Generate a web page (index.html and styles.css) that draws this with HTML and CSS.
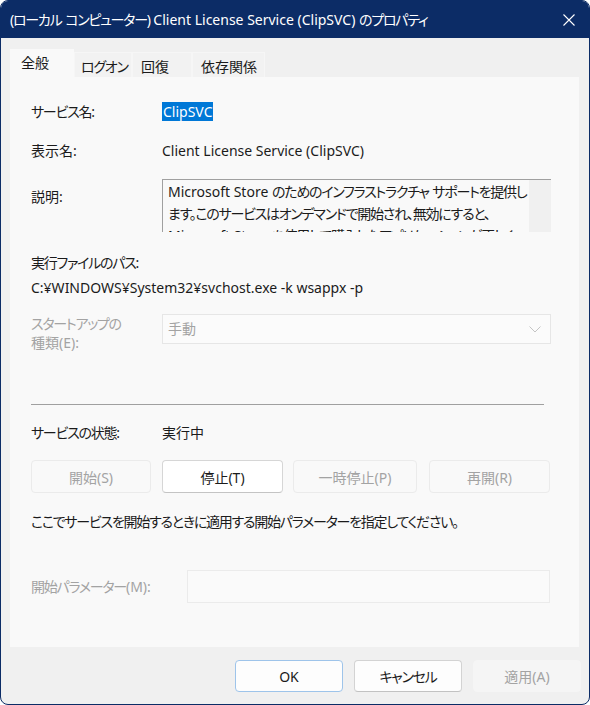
FILE: index.html
```html
<!DOCTYPE html>
<html lang="ja">
<head>
<meta charset="utf-8">
<title>ClipSVC のプロパティ</title>
<link rel="stylesheet" href="styles.css">
</head>
<body>
<div class="window">
  <div class="titlebar">
    <span class="title"><span class="ja">(ローカル</span> <span class="ja">コンピューター)</span> Client License Service (ClipSVC) <span class="ja">のプロパティ</span></span>
    <svg class="close" width="12" height="12" viewBox="0 0 12 12"><path d="M0.5 0.5 L11.5 11.5 M11.5 0.5 L0.5 11.5" stroke="#ffffff" stroke-width="1.1" fill="none"/></svg>
  </div>
  <div class="tabs">
    <div class="tab tab-selected tab-general">全般</div>
    <div class="tab tab-logon"><span class="ja">ログオン</span></div>
    <div class="tab tab-recovery">回復</div>
    <div class="tab tab-deps">依存関係</div>
  </div>
  <div class="panel">
    <div class="row row-name">
      <span class="label ja">サービス名:</span>
      <span class="value"><span class="selected-text">ClipSVC</span></span>
    </div>
    <div class="row row-display">
      <span class="label">表示名:</span>
      <span class="value">Client License Service (ClipSVC)</span>
    </div>
    <div class="row row-desc">
      <span class="label label-desc">説明:</span>
      <div class="descbox">
        <div class="desctext">Microsoft Store <span class="ja">のためのインフラストラクチャ</span> <span class="ja">サポートを提供し</span><br><span class="ja">ます。このサービスはオンデマンドで開始され、無効にすると、</span><br>Microsoft Store <span class="ja">を使用して購入したアプリケーションが正しく</span></div>
        <div class="scrollbar"></div>
      </div>
    </div>
    <div class="row row-pathlabel">
      <span class="label ja">実行ファイルのパス:</span>
    </div>
    <div class="row row-path">
      <span class="label">C:¥WINDOWS¥System32¥svchost.exe -k wsappx -p</span>
    </div>
    <div class="row row-startup">
      <span class="label label-startup disabled"><span class="ja">スタートアップの</span><br>種類(E):</span>
      <div class="combo">
        <span class="combo-text">手動</span>
        <svg class="chevron" width="12" height="7" viewBox="0 0 12 7"><path d="M0.5 0.5 L6 6 L11.5 0.5" stroke="#c4c4c4" stroke-width="1" fill="none"/></svg>
      </div>
    </div>
    <div class="separator"></div>
    <div class="row row-status">
      <span class="label ja">サービスの状態:</span>
      <span class="value">実行中</span>
    </div>
    <div class="btnrow">
      <div class="btn btn-disabled btn-start">開始(S)</div>
      <div class="btn btn-stop">停止(T)</div>
      <div class="btn btn-disabled btn-pause">一時停止(P)</div>
      <div class="btn btn-disabled btn-resume">再開(R)</div>
    </div>
    <div class="row row-info">
      <span class="label ja">ここでサービスを開始するときに適用する開始パラメーターを指定してください。</span>
    </div>
    <div class="row row-param">
      <span class="label label-param disabled"><span class="ja">開始パラメーター</span>(M):</span>
      <div class="paraminput"></div>
    </div>
  </div>
  <div class="footer">
    <div class="fbtn fbtn-default">OK</div>
    <div class="fbtn"><span class="ja">キャンセル</span></div>
    <div class="fbtn fbtn-disabled">適用(A)</div>
  </div>
</div>
</body>
</html>
```
FILE: styles.css
```css
* { box-sizing: border-box; }
html, body { margin: 0; padding: 0; background: #ffffff; }
body {
  font-family: "Noto Sans", "Noto Sans CJK JP", sans-serif;
  font-size: 14px;
  font-feature-settings: "palt";
  color: #1b1b1b;
}
.ja { letter-spacing: -1.25px; }
.window {
  width: 590px;
  height: 705px;
  border: 1px solid #0c2c66;
  border-radius: 8px;
  overflow: hidden;
  background: #f0f0f0;
  display: flex;
  flex-direction: column;
}
.titlebar {
  height: 37px;
  flex: none;
  background: #0c2c66;
  display: flex;
  align-items: center;
  justify-content: space-between;
  padding: 0 14px 0 9px;
}
.title {
  color: #ffffff;
  font-size: 14px;
  line-height: 20px;
  white-space: nowrap;
}
.close { display: block; margin-top: 1px; }
.tabs {
  display: flex;
  align-items: flex-end;
  margin: 11px 0 0 9px;
  height: 28px;
  flex: none;
}
.tab {
  height: 25px;
  padding: 4px 0 0 6px;
  line-height: 20px;
  background: #f2f2f2;
  border: 1px solid #f6f6f6;
  border-bottom: none;
  white-space: nowrap;
  color: #1b1b1b;
}
.tab-selected {
  height: 28px;
  padding: 3px 0 0 10px;
  background: #f9f9f9;
  border-color: #f9f9f9;
}
.tab-general { width: 64px; }
.tab-logon { width: 58px; }
.tab-recovery { width: 60px; padding-left: 8px; }
.tab-deps { width: 73px; padding-left: 8px; }
.panel {
  margin: 0 10px 0 9px;
  height: 570px;
  flex: none;
  background: #f9f9f9;
  padding: 0 0 0 21px;
  display: flex;
  flex-direction: column;
}
.row {
  display: flex;
  align-items: center;
  line-height: 20px;
  white-space: nowrap;
}
.label { flex: none; }
.row-name .label,
.row-display .label,
.row-desc .label,
.row-status .label,
.row-startup .label { width: 131px; }
.value { flex: none; }
.selected-text {
  display: inline-block;
  background: #0078d7;
  color: #ffffff;
  line-height: 19px;
  padding: 0 1px;
}
.row-name { margin-top: 25px; }
.row-display { margin-top: 19px; }
.row-desc { margin-top: 18px; align-items: flex-start; }
.label-desc { padding-top: 8px; }
.descbox {
  width: 389px;
  height: 53px;
  border-top: 1px solid #a0a0a0;
  border-left: 1px solid #a0a0a0;
  background: #ffffff;
  display: flex;
  overflow: hidden;
}
.desctext {
  flex: 1;
  padding: 1px 0 0 5px;
  line-height: 22px;
  white-space: nowrap;
  overflow: hidden;
  background: #f9f9f9;
}
.scrollbar {
  width: 22px;
  flex: none;
  background: #f0f0f0;
}
.row-pathlabel { margin-top: 21px; }
.row-path { margin-top: 5px; }
.row-startup { margin-top: 16px; align-items: flex-start; }
.label-startup { line-height: 19px; }
.disabled { color: #a3a3a3; }
.combo {
  width: 389px;
  height: 30px;
  border: 1px solid #e6e6e6;
  background: #fbfbfb;
  display: flex;
  align-items: center;
  justify-content: space-between;
  padding: 0 9px 0 5px;
}
.combo-text { color: #a3a3a3; }
.chevron { display: block; }
.separator {
  margin-top: 52px;
  width: 513px;
  height: 1px;
  background: #a0a0a0;
  flex: none;
}
.row-status { margin-top: 18px; }
.btnrow {
  margin-top: 17px;
  display: flex;
  height: 33px;
  flex: none;
}
.btn {
  height: 33px;
  border-radius: 4px;
  display: flex;
  align-items: center;
  justify-content: center;
  white-space: nowrap;
}
.btn-disabled {
  background: #f9f9f9;
  border: 1px solid #ebebeb;
  color: #a3a3a3;
}
.btn-stop {
  background: #ffffff;
  border: 1px solid #d6d6d6;
  border-bottom-color: #c4c4c4;
  color: #1b1b1b;
}
.btn-start { width: 120px; }
.btn-stop { width: 121px; margin-left: 11px; }
.btn-pause { width: 124px; margin-left: 10px; }
.btn-resume { width: 121px; margin-left: 12px; }
.row-info { margin-top: 19px; }
.row-param { margin-top: 38px; }
.label-param { width: 156px; }
.paraminput {
  width: 363px;
  height: 33px;
  border: 1px solid #ebebeb;
  background: #fafafa;
}
.footer {
  display: flex;
  justify-content: flex-end;
  gap: 11px;
  margin: 13px 8px 0 0;
}
.fbtn {
  width: 108px;
  height: 32px;
  border-radius: 4px;
  border: 1px solid #d3d3d3;
  border-bottom-color: #c2c2c2;
  background: #fdfdfd;
  display: flex;
  align-items: center;
  justify-content: center;
  color: #1b1b1b;
  white-space: nowrap;
}
.fbtn-default {
  border: 1px solid #9ec4ea;
  background: #fdfdfd;
}
.fbtn-disabled {
  background: #f5f5f5;
  border-color: #f5f5f5;
  color: #a3a3a3;
}
```
